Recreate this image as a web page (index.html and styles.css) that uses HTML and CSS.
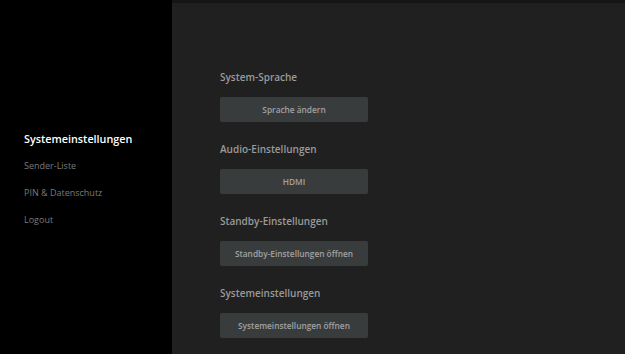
FILE: index.html
```html
<!DOCTYPE html>
<html lang="de">
<head>
  <meta charset="UTF-8" />
  <meta name="viewport" content="width=device-width, initial-scale=1" />
  <title>Einstellungen</title>
  <link rel="stylesheet" href="styles.css">
</head>
<body>
  <div class="app">
    <aside class="sidebar">
      <nav class="menu">
        <a href="#" class="active">Systemeinstellungen</a>
        <a href="#">Sender-Liste</a>
        <a href="#">PIN &amp; Datenschutz</a>
        <a href="#">Logout</a>
      </nav>
    </aside>

    <main class="content">
      <section class="group">
        <h2>System-Sprache</h2>
        <button>Sprache ändern</button>
      </section>
      <section class="group">
        <h2>Audio-Einstellungen</h2>
        <button>HDMI</button>
      </section>
      <section class="group">
        <h2>Standby-Einstellungen</h2>
        <button>Standby-Einstellungen öffnen</button>
      </section>
      <section class="group">
        <h2>Systemeinstellungen</h2>
        <button>Systemeinstellungen öffnen</button>
      </section>
    </main>
  </div>
</body>
</html>
```

FILE: styles.css
```css
body {
  margin: 0;
  background: #151515;
  font-family: "Open Sans", Arial, sans-serif;
  color: #999;
}
.app {
  display: flex;
  height: 354px;
}
.sidebar {
  width: 172px;
  background: #000;
}
.menu {
  display: flex;
  flex-direction: column;
  padding: 126px 0 0 24px;
}
.menu a {
  color: #7a7a7a;
  text-decoration: none;
  font-size: 9px;
  line-height: 27px;
}
.menu a.active {
  color: #fff;
  font-size: 10.8px;
  font-weight: 600;
  line-height: 26px;
}
.content {
  flex: 1;
  margin-top: 3px;
  background: #202020;
  padding: 66px 0 0 48px;
}
.group {
  margin-bottom: 19px;
}
.group h2 {
  margin: 0 0 12px;
  font-size: 10px;
  font-weight: 600;
  color: #9a9a9a;
  line-height: 16px;
}
button {
  display: block;
  width: 148px;
  height: 25px;
  background: #393c3d;
  border: none;
  border-radius: 2px;
  color: #a2a2a2;
  font-family: "Open Sans", Arial, sans-serif;
  font-size: 8.3px;
  font-weight: 600;
  cursor: pointer;
}
```
